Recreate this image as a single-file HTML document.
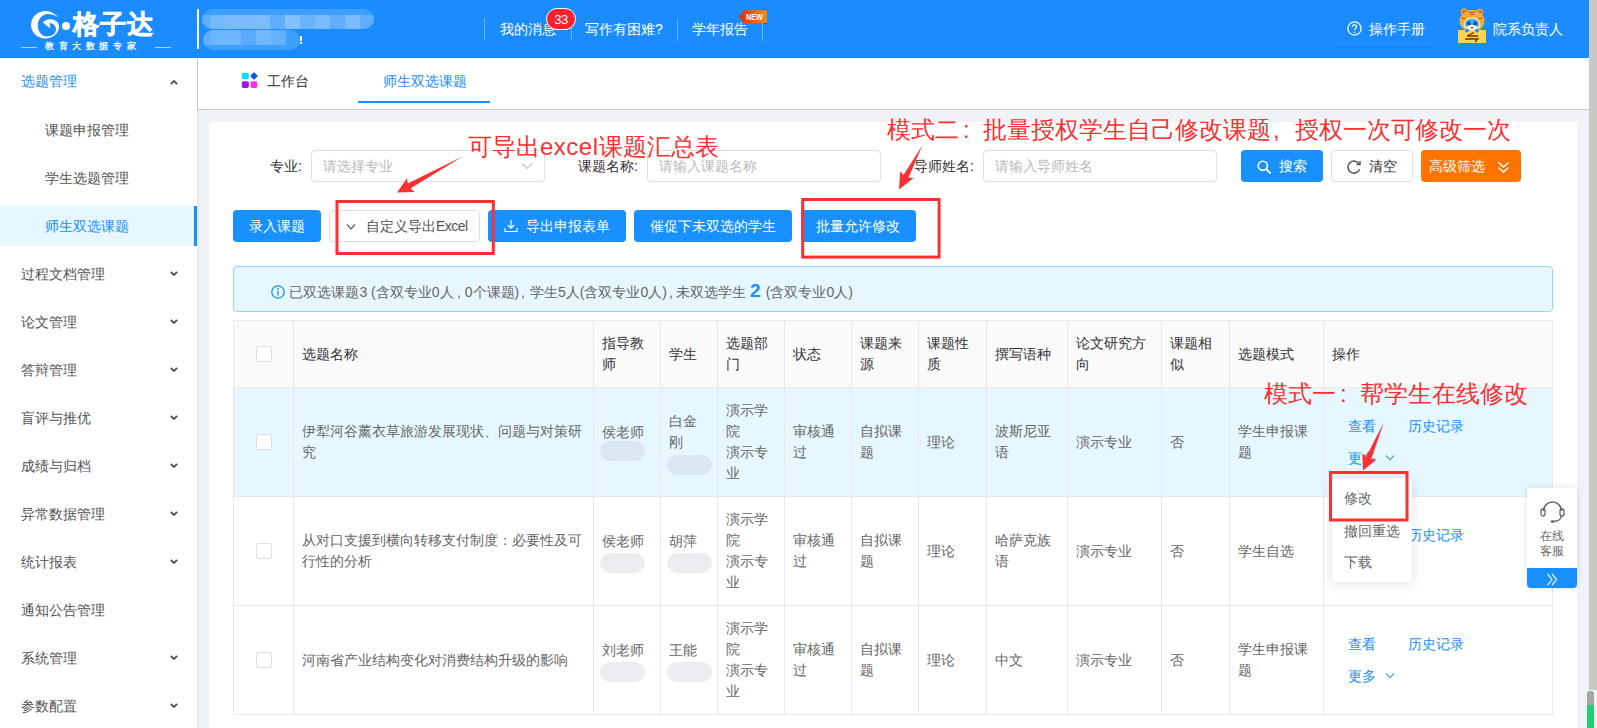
<!DOCTYPE html>
<html><head><meta charset="utf-8">
<style>
*{margin:0;padding:0;box-sizing:border-box}
html,body{width:1597px;height:728px;overflow:hidden;background:#f0f2f5;font-family:"Liberation Sans",sans-serif;font-size:14px;color:#333}
.a{position:absolute;white-space:nowrap}
#hdr{position:absolute;left:0;top:0;width:1589px;height:58px;background:#1a8cff}
#side{position:absolute;left:0;top:58px;width:197px;height:670px;background:#fff}
#tabs{position:absolute;left:197px;top:58px;width:1392px;height:52px;background:#fff;border-bottom:1px solid #c9c9c9;border-left:1px solid #c9c9c9}
#card{position:absolute;left:209px;top:122px;width:1368px;height:620px;background:#fff;border-radius:3px}
#shd{position:absolute;left:197px;top:110px;width:5px;height:618px;background:linear-gradient(to right,#e8eaed,#f0f2f5)}
#sb{position:absolute;left:1589px;top:0;width:8px;height:690px;background:#c8c8c8}
.mi{position:absolute;left:21px;color:#555;font-size:14px;line-height:20px}
.sub{position:absolute;left:45px;color:#555;font-size:14px;line-height:20px}
.chevu{position:absolute;left:170px;width:8px;height:5px}
.chev{position:absolute;left:170px;width:8px;height:5px}
.lbl{font-size:14px;line-height:20px;color:#333}
.ph{font-size:14px;line-height:20px;color:#bbb}
.bt{font-size:14px;line-height:20px;color:#fff}
.inp{height:32px;border:1px solid #dcdfe6;border-radius:4px;background:#fff}
.btn{height:32px;border-radius:4px;background:#1890ff}
/*TCSS*/
.tc{font-size:14px;line-height:21px}
.pill{height:20px;border-radius:10px;background:rgba(185,192,200,.28)}
.cb{width:16px;height:16px;border:1px solid #dcdfe6;border-radius:2px;background:#fff}
.ann{font-size:24px;line-height:32px;color:#fb3030}
.col{display:inline-block;width:24px;padding-left:4px}
/*/TCSS*/
</style></head><body>
<div id="hdr">
<svg class="a" style="left:30px;top:10px" width="31" height="30" viewBox="0 0 31 30">
<path d="M28.6 7.6 C24 2.5 19 1 15.7 1 C7 1 1 7.5 1 15 C1 22.5 7.5 28.4 15 28.4 C23 28.4 29 23 29 16.7 C29 12 25 9.2 20 9.2 C17 9.2 14.5 10.5 12.7 12.5 L20.4 18.5 L19.5 13 C23.5 13.5 26 16 26 19.5 C26 23.5 22 26.5 17 26.5 C11.5 26.5 7.8 21.5 7.8 15.5 C7.8 9 12.5 4.1 18 4.1 C22 4.1 25.5 5.3 28.6 7.6 Z" fill="#fff"/>
</svg>
<div class="a" style="left:62px;top:22px;width:8px;height:8px;border-radius:50%;background:#fff"></div>
<div class="a" style="left:73px;top:7px;font-size:26px;line-height:34px;font-weight:bold;color:#fff;letter-spacing:1px;-webkit-text-stroke:0.7px #fff">格子达</div>
<div class="a" style="left:21px;top:47px;width:16px;height:1px;background:rgba(255,255,255,.6)"></div>
<div class="a" style="left:155px;top:47px;width:16px;height:1px;background:rgba(255,255,255,.6)"></div>
<div class="a" style="left:45px;top:41px;font-size:9px;line-height:11px;color:#fff;letter-spacing:4.6px;font-weight:bold;opacity:.95">教育大数据专家</div>
<div class="a" style="left:197px;top:9px;width:2px;height:40px;background:#fff"></div>
<div class="a" style="left:202px;top:9px;width:172px;height:20px;border-radius:10px;background:#3d9fff;overflow:hidden"><div style="position:absolute;left:8px;top:6px;width:15px;height:14px;background:#74b8ff"></div><div style="position:absolute;left:23px;top:6px;width:15px;height:14px;background:#7abbff"></div><div style="position:absolute;left:38px;top:6px;width:15px;height:14px;background:#7abcff"></div><div style="position:absolute;left:53px;top:6px;width:15px;height:14px;background:#7dbdff"></div><div style="position:absolute;left:68px;top:6px;width:15px;height:14px;background:#5eadff"></div><div style="position:absolute;left:83px;top:6px;width:15px;height:14px;background:#82c0ff"></div><div style="position:absolute;left:98px;top:6px;width:15px;height:14px;background:#6ab4ff"></div><div style="position:absolute;left:113px;top:6px;width:15px;height:14px;background:#7abcff"></div><div style="position:absolute;left:128px;top:6px;width:15px;height:14px;background:#5eadff"></div><div style="position:absolute;left:143px;top:6px;width:15px;height:14px;background:#7abcff"></div><div style="position:absolute;left:158px;top:6px;width:15px;height:14px;background:#5eadff"></div><div style="position:absolute;left:0;top:6px;width:8px;height:14px;background:#5eadff"></div><div style="position:absolute;left:173px;top:6px;width:10px;height:14px;background:#5eadff"></div></div>
<div class="a" style="left:203px;top:30px;width:97px;height:20px;border-radius:10px;background:#3d9fff;overflow:hidden"><div style="position:absolute;left:0;top:0;width:8px;height:15px;background:#5eadff"></div><div style="position:absolute;left:8px;top:0;width:15px;height:15px;background:#6cb5ff"></div><div style="position:absolute;left:23px;top:0;width:15px;height:15px;background:#6cb5ff"></div><div style="position:absolute;left:38px;top:0;width:15px;height:15px;background:#5aabff"></div><div style="position:absolute;left:53px;top:0;width:15px;height:15px;background:#72b8ff"></div><div style="position:absolute;left:68px;top:0;width:15px;height:15px;background:#64b1ff"></div></div><div class="a" style="left:300px;top:36px;width:1.5px;height:5px;background:#fff"></div><div class="a" style="left:300px;top:42px;width:1.5px;height:1.5px;background:#fff"></div>
<div class="a" style="left:484px;top:18px;width:1px;height:22px;background:rgba(255,255,255,.35)"></div>
<div class="a" style="left:571px;top:19px;width:1px;height:22px;background:rgba(255,255,255,.35)"></div>
<div class="a" style="left:677px;top:19px;width:1px;height:22px;background:rgba(255,255,255,.35)"></div>
<div class="a" style="left:762px;top:19px;width:1px;height:22px;background:rgba(255,255,255,.35)"></div>
<div class="a" style="left:500px;top:19px;font-size:14px;line-height:20px;color:#fff">我的消息</div>
<div class="a" style="left:546px;top:8px;width:30px;height:22px;border-radius:11px;background:#f5222d;border:1px solid #fff;color:#fff;font-size:13px;line-height:21px;text-align:center;letter-spacing:-0.6px">33</div>
<div class="a" style="left:585px;top:19px;font-size:14px;line-height:20px;color:#fff">写作有困难?</div>
<div class="a" style="left:692px;top:19px;font-size:14px;line-height:20px;color:#fff">学年报告</div>
<svg class="a" style="left:737px;top:8px" width="31" height="18" viewBox="0 0 31 18"><defs><linearGradient id="ng" x1="0" x2="1"><stop offset="0" stop-color="#e32c0c"/><stop offset="1" stop-color="#ff8c00"/></linearGradient></defs><path d="M26.5 2.3 L28 0.6 L29.8 2.3 Z M26.5 15 L28 16.8 L29.8 15 Z" fill="#c8280a"/><path d="M1.8 8.7 L7 2.3 H29.8 V15 H7 Z" fill="url(#ng)"/><text x="17.5" y="12.4" font-family="Liberation Sans" font-size="9" font-weight="bold" fill="#fff" text-anchor="middle" textLength="17" lengthAdjust="spacingAndGlyphs">NEW</text></svg>
<svg class="a" style="left:1347px;top:21px" width="15" height="15" viewBox="0 0 15 15"><circle cx="7.5" cy="7.5" r="6.6" fill="none" stroke="#fff" stroke-width="1.2"/><path d="M5.4 5.8 C5.4 3.2 9.6 3.2 9.6 5.8 C9.6 7.4 7.5 7.4 7.5 9.2" fill="none" stroke="#fff" stroke-width="1.2"/><circle cx="7.5" cy="11.2" r="0.8" fill="#fff"/></svg>
<div class="a" style="left:1331px;top:36px;width:110px;height:10px;border-radius:0 0 8px 8px;box-shadow:0 1px 0 rgba(0,0,0,.05)"></div>
<div class="a" style="left:1369px;top:19px;font-size:14px;line-height:20px;color:#fff">操作手册</div>
<svg class="a" style="left:1456px;top:8px" width="32" height="36" viewBox="0 0 32 36">
<circle cx="8" cy="3.5" r="3.2" fill="#f5a030"/><circle cx="24" cy="4" r="3.2" fill="#f5a030"/>
<circle cx="8" cy="3.8" r="1.6" fill="#b8561a"/><circle cx="24" cy="4.2" r="1.6" fill="#b8561a"/>
<ellipse cx="16" cy="13" rx="12.5" ry="11" fill="#f7a733"/>
<path d="M13 4.5 h6 M14 6.5 h4 M6 10 l3 1 M26 10 l-3 1" stroke="#c0561b" stroke-width="1.2"/>
<ellipse cx="16" cy="16.5" rx="8.5" ry="7.5" fill="#fde3a0"/>
<ellipse cx="16" cy="16" rx="7" ry="5.2" fill="#3ea8f0"/>
<ellipse cx="16" cy="20" rx="6" ry="3" fill="#fff"/>
<ellipse cx="12.8" cy="15.6" rx="1.6" ry="2" fill="#1c3e8c"/><ellipse cx="19.2" cy="15.6" rx="1.6" ry="2" fill="#1c3e8c"/>
<path d="M14 19 h4 l-2 2 z" fill="#f04020"/>
<rect x="2" y="22" width="28" height="13" fill="#fbd451"/>
<circle cx="11" cy="22.5" r="2" fill="#2f8ee8"/><circle cx="21" cy="22.5" r="2" fill="#2f8ee8"/>
<path d="M18 24.5 L11 28 H22 M9 31 H22 L19 34" fill="none" stroke="#7a2a10" stroke-width="1.3"/>
</svg>
<div class="a" style="left:1493px;top:19px;font-size:14px;line-height:20px;color:#fff">院系负责人</div>
</div>
<div id="side">
<div class="mi" style="top:13px;color:#1890ff">选题管理</div>
<svg class="chevu" style="top:22px" viewBox="0 0 8 5"><path d="M0.8 4.2 L4 1 L7.2 4.2" fill="none" stroke="#555" stroke-width="1.9"/></svg>
<div class="sub" style="top:62px">课题申报管理</div>
<div class="sub" style="top:110px">学生选题管理</div>
<div class="a" style="left:0;top:148px;width:197px;height:40px;background:#e6f7ff"></div>
<div class="a" style="left:194px;top:148px;width:3px;height:40px;background:#1890ff"></div>
<div class="sub" style="top:158px;color:#1890ff">师生双选课题</div>
<div class="mi" style="top:206px">过程文档管理</div>
<svg class="chev" style="top:213px" viewBox="0 0 8 5"><path d="M0.8 0.8 L4 4 L7.2 0.8" fill="none" stroke="#555" stroke-width="1.9"/></svg>
<div class="mi" style="top:254px">论文管理</div>
<svg class="chev" style="top:261px" viewBox="0 0 8 5"><path d="M0.8 0.8 L4 4 L7.2 0.8" fill="none" stroke="#555" stroke-width="1.9"/></svg>
<div class="mi" style="top:302px">答辩管理</div>
<svg class="chev" style="top:309px" viewBox="0 0 8 5"><path d="M0.8 0.8 L4 4 L7.2 0.8" fill="none" stroke="#555" stroke-width="1.9"/></svg>
<div class="mi" style="top:350px">盲评与推优</div>
<svg class="chev" style="top:357px" viewBox="0 0 8 5"><path d="M0.8 0.8 L4 4 L7.2 0.8" fill="none" stroke="#555" stroke-width="1.9"/></svg>
<div class="mi" style="top:398px">成绩与归档</div>
<svg class="chev" style="top:405px" viewBox="0 0 8 5"><path d="M0.8 0.8 L4 4 L7.2 0.8" fill="none" stroke="#555" stroke-width="1.9"/></svg>
<div class="mi" style="top:446px">异常数据管理</div>
<svg class="chev" style="top:453px" viewBox="0 0 8 5"><path d="M0.8 0.8 L4 4 L7.2 0.8" fill="none" stroke="#555" stroke-width="1.9"/></svg>
<div class="mi" style="top:494px">统计报表</div>
<svg class="chev" style="top:501px" viewBox="0 0 8 5"><path d="M0.8 0.8 L4 4 L7.2 0.8" fill="none" stroke="#555" stroke-width="1.9"/></svg>
<div class="mi" style="top:542px">通知公告管理</div>
<div class="mi" style="top:590px">系统管理</div>
<svg class="chev" style="top:597px" viewBox="0 0 8 5"><path d="M0.8 0.8 L4 4 L7.2 0.8" fill="none" stroke="#555" stroke-width="1.9"/></svg>
<div class="mi" style="top:638px">参数配置</div>
<svg class="chev" style="top:645px" viewBox="0 0 8 5"><path d="M0.8 0.8 L4 4 L7.2 0.8" fill="none" stroke="#555" stroke-width="1.9"/></svg>
</div>
<div id="tabs">
<svg class="a" style="left:43px;top:13px" width="18" height="18" viewBox="0 0 18 18">
<rect x="0.8" y="1.7" width="7" height="6.6" rx="1.6" fill="#0ae0f8"/>
<rect x="10.2" y="2.2" width="5.6" height="5.6" rx="1.1" fill="#0a55ff" transform="rotate(45 13 5)"/>
<rect x="0.8" y="10.2" width="7" height="6.7" rx="1.6" fill="#a010f5"/>
<rect x="9.6" y="10.2" width="6.7" height="6.7" rx="1.6" fill="#ff30e0"/>
</svg>
<div class="a" style="left:69px;top:13px;font-size:14px;line-height:20px;color:#333">工作台</div>
<div class="a" style="left:185px;top:13px;font-size:14px;line-height:20px;color:#1890ff">师生双选课题</div>
<div class="a" style="left:160px;top:42.5px;width:132px;height:2px;background:#1890ff"></div>
</div>
<div id="shd"></div>
<div id="card"></div>
<div id="form">
<div class="a lbl" style="left:270px;top:156px">专业:</div>
<div class="a inp" style="left:311px;top:150px;width:234px"></div>
<div class="a ph" style="left:323px;top:156px">请选择专业</div>
<svg class="a" style="left:521px;top:162px" width="12" height="8" viewBox="0 0 12 8"><path d="M1 1.5 L6 6.5 L11 1.5" fill="none" stroke="#c0c4cc" stroke-width="1.2"/></svg>
<div class="a lbl" style="left:578px;top:156px">课题名称:</div>
<div class="a inp" style="left:647px;top:150px;width:234px"></div>
<div class="a ph" style="left:659px;top:156px">请输入课题名称</div>
<div class="a lbl" style="left:914px;top:156px">导师姓名:</div>
<div class="a inp" style="left:983px;top:150px;width:234px"></div>
<div class="a ph" style="left:995px;top:156px">请输入导师姓名</div>
<div class="a btn" style="left:1241px;top:150px;width:82px"></div>
<svg class="a" style="left:1257px;top:160px" width="14" height="14" viewBox="0 0 14 14"><circle cx="5.8" cy="5.8" r="4.6" fill="none" stroke="#fff" stroke-width="1.6"/><path d="M9.2 9.2 L13 13" stroke="#fff" stroke-width="1.8" stroke-linecap="round"/></svg>
<div class="a bt" style="left:1279px;top:156px">搜索</div>
<div class="a inp" style="left:1331px;top:150px;width:82px;height:32px"></div>
<svg class="a" style="left:1347px;top:160px" width="14" height="14" viewBox="0 0 14 14"><path d="M12.2 4.2 A6 6 0 1 0 12.6 9.2" fill="none" stroke="#555" stroke-width="1.5"/><path d="M9.5 4.6 L13 4.6 L13 1" fill="none" stroke="#555" stroke-width="1.5"/></svg>
<div class="a lbl" style="left:1369px;top:156px">清空</div>
<div class="a btn" style="left:1421px;top:150px;width:100px;background:#ff7300"></div>
<div class="a bt" style="left:1429px;top:156px">高级筛选</div>
<svg class="a" style="left:1497px;top:161px" width="13" height="13" viewBox="0 0 13 13"><path d="M1.5 1.5 L6.5 6 L11.5 1.5 M1.5 6.5 L6.5 11 L11.5 6.5" fill="none" stroke="#fff" stroke-width="1.4"/></svg>

<div class="a btn" style="left:233px;top:210px;width:88px"></div>
<div class="a bt" style="left:249px;top:216px">录入课题</div>
<div class="a inp" style="left:329px;top:210px;width:151px;height:32px"></div>
<svg class="a" style="left:346px;top:223px" width="10" height="8" viewBox="0 0 10 8"><path d="M1 1.5 L5 5.8 L9 1.5" fill="none" stroke="#555" stroke-width="1.2"/></svg>
<div class="a lbl" style="left:366px;top:216px;color:#555">自定义导出<span style="letter-spacing:-0.5px">Excel</span></div>
<div class="a btn" style="left:488px;top:210px;width:138px"></div>
<svg class="a" style="left:504px;top:219px" width="14" height="14" viewBox="0 0 14 14"><path d="M7 1 L7 9 M3.8 6 L7 9.2 L10.2 6 M1 9 L1 12.5 L13 12.5 L13 9" fill="none" stroke="#fff" stroke-width="1.15"/></svg>
<div class="a bt" style="left:526px;top:216px">导出申报表单</div>
<div class="a btn" style="left:634px;top:210px;width:158px"></div>
<div class="a bt" style="left:650px;top:216px">催促下未双选的学生</div>
<div class="a btn" style="left:801px;top:210px;width:115px"></div>
<div class="a bt" style="left:816px;top:216px">批量允许修改</div>
</div>
<!--TBL-->
<div class="a" style="left:233px;top:320px;width:1320px;height:395px;border:1px solid #e8e8e8;background:#fff"></div>
<div class="a" style="left:234px;top:321px;width:1318px;height:66px;background:#fafafa"></div>
<div class="a" style="left:234px;top:387px;width:1318px;height:109px;background:#e6f7ff"></div>
<div class="a" style="left:234px;top:387px;width:1318px;height:1px;background:#e8e8e8"></div>
<div class="a" style="left:234px;top:496px;width:1318px;height:1px;background:#e8e8e8"></div>
<div class="a" style="left:234px;top:605px;width:1318px;height:1px;background:#e8e8e8"></div>
<div class="a" style="left:293px;top:321px;width:1px;height:393px;background:#e8e8e8"></div>
<div class="a" style="left:593px;top:321px;width:1px;height:393px;background:#e8e8e8"></div>
<div class="a" style="left:660px;top:321px;width:1px;height:393px;background:#e8e8e8"></div>
<div class="a" style="left:717px;top:321px;width:1px;height:393px;background:#e8e8e8"></div>
<div class="a" style="left:784px;top:321px;width:1px;height:393px;background:#e8e8e8"></div>
<div class="a" style="left:851px;top:321px;width:1px;height:393px;background:#e8e8e8"></div>
<div class="a" style="left:918px;top:321px;width:1px;height:393px;background:#e8e8e8"></div>
<div class="a" style="left:986px;top:321px;width:1px;height:393px;background:#e8e8e8"></div>
<div class="a" style="left:1067px;top:321px;width:1px;height:393px;background:#e8e8e8"></div>
<div class="a" style="left:1161px;top:321px;width:1px;height:393px;background:#e8e8e8"></div>
<div class="a" style="left:1229px;top:321px;width:1px;height:393px;background:#e8e8e8"></div>
<div class="a" style="left:1323px;top:321px;width:1px;height:393px;background:#e8e8e8"></div>
<div class="a tc" style="left:302px;top:343.8px;color:#333">选题名称</div>
<div class="a tc" style="left:602px;top:333.3px;color:#333">指导教</div>
<div class="a tc" style="left:602px;top:354.3px;color:#333">师</div>
<div class="a tc" style="left:669px;top:343.8px;color:#333">学生</div>
<div class="a tc" style="left:726px;top:333.3px;color:#333">选题部</div>
<div class="a tc" style="left:726px;top:354.3px;color:#333">门</div>
<div class="a tc" style="left:793px;top:343.8px;color:#333">状态</div>
<div class="a tc" style="left:860px;top:333.3px;color:#333">课题来</div>
<div class="a tc" style="left:860px;top:354.3px;color:#333">源</div>
<div class="a tc" style="left:927px;top:333.3px;color:#333">课题性</div>
<div class="a tc" style="left:927px;top:354.3px;color:#333">质</div>
<div class="a tc" style="left:995px;top:343.8px;color:#333">撰写语种</div>
<div class="a tc" style="left:1076px;top:333.3px;color:#333">论文研究方</div>
<div class="a tc" style="left:1076px;top:354.3px;color:#333">向</div>
<div class="a tc" style="left:1170px;top:333.3px;color:#333">课题相</div>
<div class="a tc" style="left:1170px;top:354.3px;color:#333">似</div>
<div class="a tc" style="left:1238px;top:343.8px;color:#333">选题模式</div>
<div class="a tc" style="left:1332px;top:343.8px;color:#333">操作</div>
<div class="a cb" style="left:256px;top:345.5px"></div>
<div class="a cb" style="left:256px;top:433.5px"></div>
<div class="a cb" style="left:256px;top:542.5px"></div>
<div class="a cb" style="left:256px;top:651.5px"></div>
<div class="a tc" style="left:302px;top:421.3px;color:#666">伊犁河谷薰衣草旅游发展现状、问题与对策研</div>
<div class="a tc" style="left:302px;top:442.3px;color:#666">究</div>
<div class="a tc" style="left:602px;top:421.8px;color:#666">侯老师</div>
<div class="a pill" style="left:600px;top:441.0px;width:45px"></div>
<div class="a tc" style="left:669px;top:411.3px;color:#666">白金</div>
<div class="a tc" style="left:669px;top:432.3px;color:#666">刚</div>
<div class="a pill" style="left:667px;top:455.0px;width:45px"></div>
<div class="a tc" style="left:726px;top:400.3px;color:#666">演示学</div>
<div class="a tc" style="left:726px;top:421.3px;color:#666">院</div>
<div class="a tc" style="left:726px;top:442.3px;color:#666">演示专</div>
<div class="a tc" style="left:726px;top:463.3px;color:#666">业</div>
<div class="a tc" style="left:793px;top:421.3px;color:#666">审核通</div>
<div class="a tc" style="left:793px;top:442.3px;color:#666">过</div>
<div class="a tc" style="left:860px;top:421.3px;color:#666">自拟课</div>
<div class="a tc" style="left:860px;top:442.3px;color:#666">题</div>
<div class="a tc" style="left:927px;top:431.8px;color:#666">理论</div>
<div class="a tc" style="left:995px;top:421.3px;color:#666">波斯尼亚</div>
<div class="a tc" style="left:995px;top:442.3px;color:#666">语</div>
<div class="a tc" style="left:1076px;top:431.8px;color:#666">演示专业</div>
<div class="a tc" style="left:1170px;top:431.8px;color:#666">否</div>
<div class="a tc" style="left:1238px;top:421.3px;color:#666">学生申报课</div>
<div class="a tc" style="left:1238px;top:442.3px;color:#666">题</div>
<div class="a tc" style="left:1348px;top:416.0px;color:#1890ff">查看</div>
<div class="a tc" style="left:1408px;top:416.0px;color:#1890ff">历史记录</div>
<div class="a tc" style="left:1348px;top:448.0px;color:#1890ff">更多</div>
<svg class="a" style="left:1385px;top:454.0px" width="10" height="8" viewBox="0 0 10 8"><path d="M1 1.5 L5 5.8 L9 1.5" fill="none" stroke="#1890ff" stroke-width="1.1"/></svg>
<div class="a tc" style="left:302px;top:530.3px;color:#666">从对口支援到横向转移支付制度：必要性及可</div>
<div class="a tc" style="left:302px;top:551.3px;color:#666">行性的分析</div>
<div class="a tc" style="left:602px;top:530.8px;color:#666">侯老师</div>
<div class="a pill" style="left:600px;top:553.0px;width:45px"></div>
<div class="a tc" style="left:669px;top:530.8px;color:#666">胡萍</div>
<div class="a pill" style="left:667px;top:553.0px;width:45px"></div>
<div class="a tc" style="left:726px;top:509.3px;color:#666">演示学</div>
<div class="a tc" style="left:726px;top:530.3px;color:#666">院</div>
<div class="a tc" style="left:726px;top:551.3px;color:#666">演示专</div>
<div class="a tc" style="left:726px;top:572.3px;color:#666">业</div>
<div class="a tc" style="left:793px;top:530.3px;color:#666">审核通</div>
<div class="a tc" style="left:793px;top:551.3px;color:#666">过</div>
<div class="a tc" style="left:860px;top:530.3px;color:#666">自拟课</div>
<div class="a tc" style="left:860px;top:551.3px;color:#666">题</div>
<div class="a tc" style="left:927px;top:540.8px;color:#666">理论</div>
<div class="a tc" style="left:995px;top:530.3px;color:#666">哈萨克族</div>
<div class="a tc" style="left:995px;top:551.3px;color:#666">语</div>
<div class="a tc" style="left:1076px;top:540.8px;color:#666">演示专业</div>
<div class="a tc" style="left:1170px;top:540.8px;color:#666">否</div>
<div class="a tc" style="left:1238px;top:540.8px;color:#666">学生自选</div>
<div class="a tc" style="left:1348px;top:525.0px;color:#1890ff">查看</div>
<div class="a tc" style="left:1408px;top:525.0px;color:#1890ff">历史记录</div>
<div class="a tc" style="left:1348px;top:557.0px;color:#1890ff">更多</div>
<svg class="a" style="left:1385px;top:563.0px" width="10" height="8" viewBox="0 0 10 8"><path d="M1 1.5 L5 5.8 L9 1.5" fill="none" stroke="#1890ff" stroke-width="1.1"/></svg>
<div class="a tc" style="left:302px;top:649.8px;color:#666">河南省产业结构变化对消费结构升级的影响</div>
<div class="a tc" style="left:602px;top:639.8px;color:#666">刘老师</div>
<div class="a pill" style="left:600px;top:661.5px;width:45px"></div>
<div class="a tc" style="left:669px;top:639.8px;color:#666">王能</div>
<div class="a pill" style="left:667px;top:661.5px;width:45px"></div>
<div class="a tc" style="left:726px;top:618.3px;color:#666">演示学</div>
<div class="a tc" style="left:726px;top:639.3px;color:#666">院</div>
<div class="a tc" style="left:726px;top:660.3px;color:#666">演示专</div>
<div class="a tc" style="left:726px;top:681.3px;color:#666">业</div>
<div class="a tc" style="left:793px;top:639.3px;color:#666">审核通</div>
<div class="a tc" style="left:793px;top:660.3px;color:#666">过</div>
<div class="a tc" style="left:860px;top:639.3px;color:#666">自拟课</div>
<div class="a tc" style="left:860px;top:660.3px;color:#666">题</div>
<div class="a tc" style="left:927px;top:649.8px;color:#666">理论</div>
<div class="a tc" style="left:995px;top:649.8px;color:#666">中文</div>
<div class="a tc" style="left:1076px;top:649.8px;color:#666">演示专业</div>
<div class="a tc" style="left:1170px;top:649.8px;color:#666">否</div>
<div class="a tc" style="left:1238px;top:639.3px;color:#666">学生申报课</div>
<div class="a tc" style="left:1238px;top:660.3px;color:#666">题</div>
<div class="a tc" style="left:1348px;top:634.0px;color:#1890ff">查看</div>
<div class="a tc" style="left:1408px;top:634.0px;color:#1890ff">历史记录</div>
<div class="a tc" style="left:1348px;top:666.0px;color:#1890ff">更多</div>
<svg class="a" style="left:1385px;top:672.0px" width="10" height="8" viewBox="0 0 10 8"><path d="M1 1.5 L5 5.8 L9 1.5" fill="none" stroke="#1890ff" stroke-width="1.1"/></svg>
<div class="a" style="left:233px;top:266px;width:1320px;height:46px;border:1px solid #91d5ff;border-radius:4px;background:#e6f7ff"></div>
<svg class="a" style="left:271px;top:285px" width="14" height="14" viewBox="0 0 14 14"><circle cx="7" cy="7" r="6.2" fill="none" stroke="#1890ff" stroke-width="1.3"/><circle cx="7" cy="4" r="0.9" fill="#1890ff"/><path d="M7 6 V10.5" stroke="#1890ff" stroke-width="1.4"/></svg>
<div class="a tc" style="left:289.4px;top:282px;color:#666">已双选课题3 (含双专业0人</div>
<div class="a tc" style="left:457.0px;top:282px;color:#666">,</div>
<div class="a tc" style="left:464.8px;top:282px;color:#666">0个课题)</div>
<div class="a tc" style="left:521.0px;top:282px;color:#666">,</div>
<div class="a tc" style="left:530.0px;top:282px;color:#666">学生5人(含双专业0人)</div>
<div class="a tc" style="left:669.0px;top:282px;color:#666">,</div>
<div class="a tc" style="left:676.4px;top:282px;color:#666">未双选学生</div>
<div class="a tc" style="left:765.8px;top:282px;color:#666">(含双专业0人)</div>
<div class="a" style="left:750px;top:279px;font-size:19px;line-height:24px;color:#1890ff;font-weight:bold">2</div>
<div class="a" style="left:1332px;top:478px;width:80px;height:104px;background:#fff;border-radius:4px;box-shadow:0 2px 12px rgba(0,0,0,.12)"></div>
<div class="a tc" style="left:1344px;top:488.0px;color:#666">修改</div>
<div class="a tc" style="left:1344px;top:520.5px;color:#666">撤回重选</div>
<div class="a tc" style="left:1344px;top:552.0px;color:#666">下载</div>
<div class="a" style="left:1527px;top:488px;width:50px;height:100px;background:#fff;border-radius:4px;box-shadow:0 0 6px rgba(0,0,0,.12);overflow:hidden"><div style="position:absolute;left:0;bottom:0;width:50px;height:20px;background:#1890ff"></div></div>
<svg class="a" style="left:1540px;top:500px" width="25" height="24" viewBox="0 0 25 24"><path d="M3.5 11 A9 9 0 0 1 21.5 11" fill="none" stroke="#666" stroke-width="1.5"/><rect x="1" y="9" width="4" height="7" rx="2" fill="none" stroke="#666" stroke-width="1.3"/><rect x="20" y="9" width="4" height="7" rx="2" fill="none" stroke="#666" stroke-width="1.3"/><path d="M21.5 16 Q21 21 13.5 21.5" fill="none" stroke="#666" stroke-width="1.5"/><ellipse cx="12.5" cy="21.5" rx="2" ry="1.3" fill="#666"/></svg>
<div class="a" style="left:1540px;top:528.5px;font-size:12px;line-height:15px;color:#666">在线<br>客服</div>
<svg class="a" style="left:1546px;top:573px" width="12" height="13" viewBox="0 0 12 13"><path d="M1.5 0.8 L6 6.5 L1.5 12.2 M6 0.8 L10.5 6.5 L6 12.2" fill="none" stroke="#fff" stroke-width="1.2"/></svg>
<svg class="a" style="left:0;top:0" width="1597" height="728" viewBox="0 0 1597 728"><polygon points="463.0,156.3 410.4,188.5 414.6,192.0 397.0,192.5 407.0,178.2 407.7,183.6" fill="#fb3030"/><polygon points="922.3,145.4 908.5,177.7 913.7,178.0 899.0,189.6 900.2,171.3 903.5,175.1" fill="#fb3030"/><polygon points="1383.8,422.5 1371.2,459.3 1376.5,459.5 1363.0,470.6 1362.3,453.3 1366.0,457.1" fill="#fb3030"/><rect x="337.0" y="201.5" width="156.3" height="52.0" fill="none" stroke="#fb3030" stroke-width="3"/><rect x="802.7" y="199.5" width="136.4" height="57.6" fill="none" stroke="#fb3030" stroke-width="3"/><rect x="1330.5" y="472.5" width="76.5" height="47.5" fill="none" stroke="#fb3030" stroke-width="3"/></svg>
<div class="a ann" style="left:468px;top:131px">可导出<span style="letter-spacing:0.5px">excel</span>课题汇总表</div>
<div class="a ann" style="left:887px;top:114px">模式二<span class="col">:</span>批量授权学生自己修改课题<span class="col" style="padding-left:2px">,</span>授权一次可修改一次</div>
<div class="a ann" style="left:1264px;top:378px">模式一<span class="col">:</span>帮学生在线修改</div>
<!--/TBL-->
<div id="sb"></div>
<div class="a" style="left:1587px;top:691px;width:7px;height:40px;border-radius:3.5px;background:#24cc74;overflow:hidden"><div style="height:14px;background:#a6a6a6;border-radius:3.5px 3.5px 0 0"></div></div>
</body></html>
